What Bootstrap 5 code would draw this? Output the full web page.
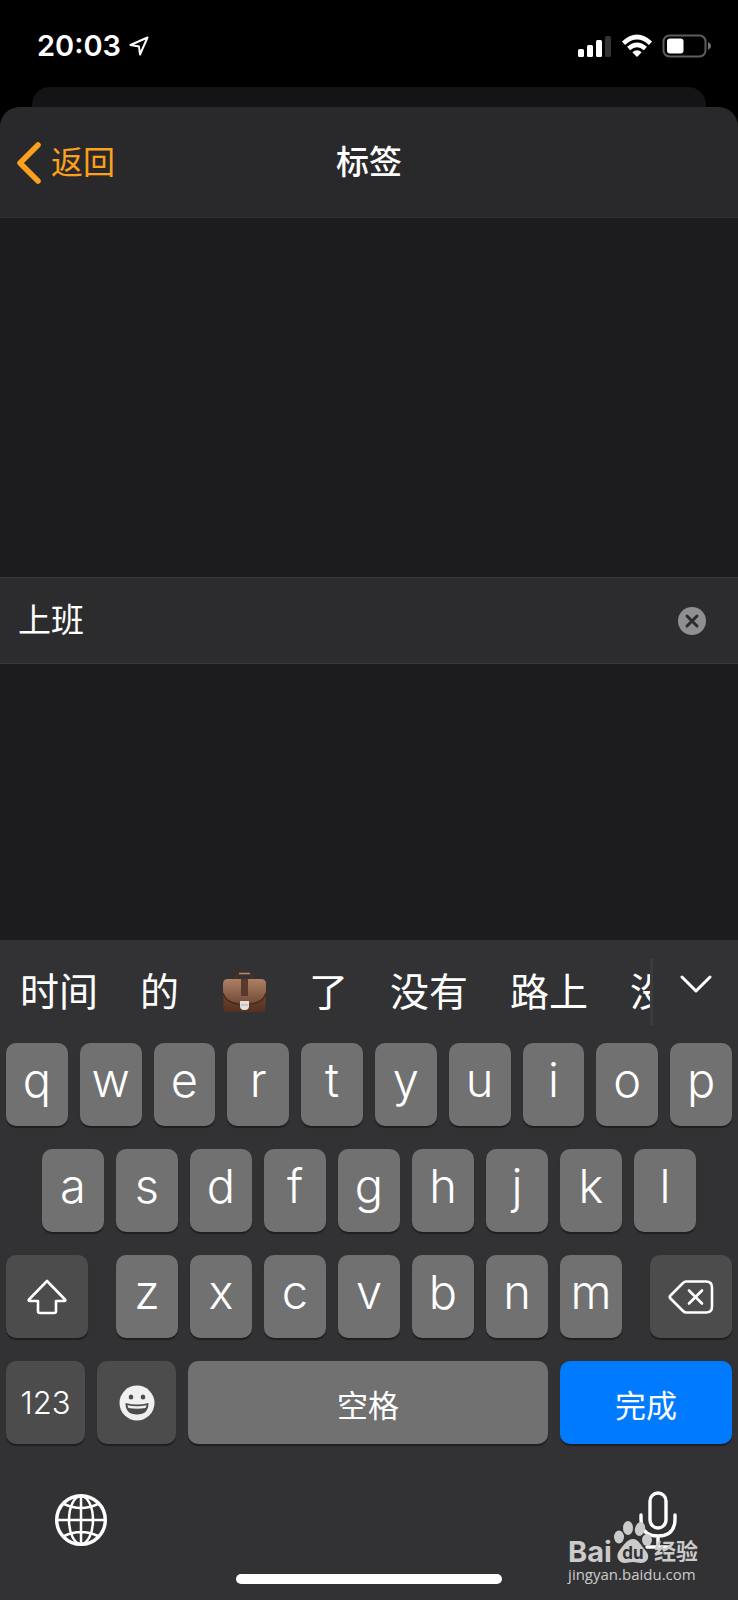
<!DOCTYPE html>
<html lang="zh-CN">
<head>
<meta charset="utf-8">
<meta name="viewport" content="width=device-width, initial-scale=1">
<title>标签</title>
<link rel="stylesheet" href="https://cdn.jsdelivr.net/npm/bootstrap@5.3.0/dist/css/bootstrap.min.css">
<script src="https://cdn.jsdelivr.net/npm/bootstrap@5.3.0/dist/js/bootstrap.bundle.min.js"></script>
<style>
  body { background: #000; color: #fff; font-family: Inter, "Noto Sans CJK SC", sans-serif; }
  button { color: inherit; background: none; border: 0; padding: 0; }
  svg { display: block; flex: none; }
  .status { height: 87px; padding: 4px 26px 0 37px; }
  .clock { font-size: 29px; font-weight: 600; line-height: 36px; }
  .sheet-behind { height: 20px; margin: 0 32px; background: #141416; border-radius: 18px 18px 0 0; }
  .sheet { background: #1c1c1e; border-radius: 20px 20px 0 0; overflow: hidden; }
  .sheet-head { height: 111px; background: #29292b; border-bottom: 1px solid #303032; }
  .side { flex: 1 1 0; }
  .back { color: #fca01d; font-size: 32px; line-height: 48px; padding: 2px 0 0 16px; gap: 9px; }
  .heading { font-size: 33px; font-weight: 500; line-height: 48px; }
  .space-above { flex: 30 0 0; }
  .space-below { flex: 23 0 0; }
  .field { height: 87px; background: #2c2c2e; border: solid #3a3a3c; border-width: 1px 0; padding: 0 32px 0 18px; }
  .field input { background: none; border: 0; outline: 0; color: #fff; font-size: 33px; line-height: 48px; padding: 0 0 2px; }
  .keyboard { background: #323234; }
  .candidates { height: 103px; }
  .words { gap: 42px; padding-left: 20px; font-size: 39px; line-height: 56px; min-width: 0; }
  .words button { flex: none; }
  .more { width: 88px; border-left: 3px solid #3b3b3d; height: 66px; padding-bottom: 6px; }
  .rows { gap: 23px; padding: 0 6px; }
  .rows > div { gap: 12px; }
  .rows > .row-home { padding: 0 36px; }
  .rows > .row-low { gap: 28px; }
  .letters { flex: 506 0 0; gap: 12px; }
  .key { flex: 1 1 0; min-width: 0; height: 83px; border-radius: 10px; background: #717172; box-shadow: 0 2px 1px #1e1e20; font-size: 47px; font-weight: 350; line-height: 60px; padding-bottom: 10px; }
  .key-dark { background: #4c4c4c; padding: 0; }
  .key-word { font-size: 31px; font-weight: 400; line-height: 46px; padding: 6px 0 0; }
  .key-num { font-size: 31px; }
  .key-blue { background: #007aff; }
  .w-side { flex: 82 0 0; }
  .w-num { flex: 79 0 0; }
  .w-space { flex: 360 0 0; }
  .w-done { flex: 172 0 0; }
  .tools { padding: 47px 60px 0 54px; }
  .home-bar { width: 36%; height: 10px; border-radius: 5px; background: #fff; margin: 25px auto 16px; }
  .watermark { right: 40px; bottom: 16px; color: #cbcbcc; pointer-events: none; }
  .wm-top { gap: 2px; }
  .wm-bai { font-size: 29px; font-weight: 700; line-height: 24px; }
  .wm-cn { font-size: 22px; font-weight: 700; line-height: 26px; }
  .wm-url { font-family: "Open Sans", sans-serif; font-size: 15px; font-weight: 500; line-height: 20px; }
</style>
</head>
<body class="min-vh-100 d-flex flex-column">
  <header class="status d-flex align-items-center justify-content-between">
    <div class="d-flex align-items-center gap-2">
      <span class="clock">20:03</span>
      <svg width="20" height="20" viewBox="0 0 20 20" fill="none" stroke="#fff" stroke-width="2" stroke-linejoin="round"><path d="M18.500 1.500 1.500 9l8.500 1.500L11 18.500z"/></svg>
    </div>
    <div class="d-flex align-items-center">
      <svg width="34" height="22" viewBox="0 0 34 22" fill="#fff"><rect y="14" width="6" height="8" rx="1.500"/><rect x="9" y="10" width="6" height="12" rx="1.500"/><rect x="18" y="5" width="6" height="17" rx="1.500"/><rect x="27" y="1" width="6" height="21" rx="1.500" fill="#333"/></svg>
      <svg class="ms-2" width="34" height="24" viewBox="0 0 34 24"><g fill="none" stroke="#fff" stroke-width="4.600"><path d="M3.500 9.200Q17-3.200 30.500 9.200"/><path d="M8.600 14.500Q17 7.200 25.400 14.500"/></g><path d="M12.300 18.200Q17 14.500 21.700 18.200L17 23z" fill="#fff"/></svg>
      <svg class="ms-2" width="50" height="24" viewBox="0 0 50 24"><rect x="1.500" y="1.500" width="42" height="21" rx="6" fill="none" stroke="#5e5e5e" stroke-width="2"/><rect x="5" y="4.500" width="16.500" height="15" rx="3" fill="#fff"/><path d="M46 8q3 1.500 3 4t-3 4z" fill="#777"/></svg>
    </div>
  </header>
  <div class="sheet-behind"></div>
  <main class="sheet flex-grow-1 d-flex flex-column">
    <div class="sheet-head d-flex align-items-center">
      <div class="side">
        <button type="button" class="back d-flex align-items-center">
          <svg width="26" height="42" viewBox="0 0 26 42" fill="none" stroke="currentColor" stroke-width="5.500" stroke-linecap="round" stroke-linejoin="round"><path d="M22 3 4 21l18 18"/></svg>
          <span>返回</span>
        </button>
      </div>
      <h1 class="heading m-0">标签</h1>
      <div class="side"></div>
    </div>
    <div class="space-above"></div>
    <div class="field d-flex align-items-center">
      <input type="text" class="flex-grow-1" aria-label="标签" value="上班">
      <button type="button" aria-label="清除">
        <svg width="28" height="28" viewBox="0 0 28 28"><circle cx="14" cy="14" r="14" fill="#8e8e93"/><path d="m9 9 10 10M19 9 9 19" stroke="#2c2c2e" stroke-width="3" stroke-linecap="round"/></svg>
      </button>
    </div>
    <div class="space-below"></div>
  </main>
  <section class="keyboard position-relative" aria-label="键盘">
    <div class="candidates d-flex align-items-center">
      <div class="words d-flex align-items-center flex-grow-1 overflow-hidden">
        <button type="button">时间</button>
        <button type="button">的</button>
        <button type="button" aria-label="公文包">
          <svg width="46" height="42" viewBox="0 0 46 42">
            <defs>
              <linearGradient id="flap" x2="0" y2="1"><stop stop-color="#ae8064"/><stop offset="1" stop-color="#714a37"/></linearGradient>
              <linearGradient id="bag" x2="0" y2="1"><stop stop-color="#825640"/><stop offset="1" stop-color="#55301f"/></linearGradient>
            </defs>
            <path d="M16 9V6q0-3 3-3h9q3 0 3 3v3" fill="none" stroke="#4b3027" stroke-width="3"/>
            <path d="M18 2.500h11" stroke="#b18b79" stroke-width="1.500"/>
            <rect x="2.500" y="10" width="42" height="31" rx="3" fill="url(#bag)"/>
            <path d="M2 13q0-5 5-5h33q5 0 5 5v9q-3 10-16 11H18Q5 32 2 22z" fill="url(#flap)"/>
            <path d="M2 22q3 10 16 11h11q13-1 16-11" fill="none" stroke="#442719" stroke-width="1.200"/>
            <path d="M20 8h7v17h-7z" fill="#5a382b"/>
            <path d="M19 30h9v5q0 4-4 4h-1q-4 0-4-4z" fill="#e2e0df"/><path d="M20 34h7" stroke="#aaa" stroke-width="1"/>
          </svg>
        </button>
        <button type="button">了</button>
        <button type="button">没有</button>
        <button type="button">路上</button>
        <button type="button">没</button>
      </div>
      <button type="button" class="more d-flex align-items-center justify-content-center flex-shrink-0" aria-label="展开">
        <svg width="32" height="30" viewBox="0 0 32 30" fill="none" stroke="#fff" stroke-width="3" stroke-linecap="round" stroke-linejoin="round"><path d="M2 3l14 14L30 3"/></svg>
      </button>
    </div>
    <div class="rows d-flex flex-column">
      <div class="d-flex">
        <button type="button" class="key">q</button><button type="button" class="key">w</button><button type="button" class="key">e</button><button type="button" class="key">r</button><button type="button" class="key">t</button><button type="button" class="key">y</button><button type="button" class="key">u</button><button type="button" class="key">i</button><button type="button" class="key">o</button><button type="button" class="key">p</button>
      </div>
      <div class="row-home d-flex">
        <button type="button" class="key">a</button><button type="button" class="key">s</button><button type="button" class="key">d</button><button type="button" class="key">f</button><button type="button" class="key">g</button><button type="button" class="key">h</button><button type="button" class="key">j</button><button type="button" class="key">k</button><button type="button" class="key">l</button>
      </div>
      <div class="row-low d-flex">
        <button type="button" class="key key-dark w-side d-flex align-items-center justify-content-center" aria-label="上档">
          <svg width="40" height="36" viewBox="0 0 40 36" fill="none" stroke="#fff" stroke-width="2.600" stroke-linejoin="round"><path d="M20 2 2 20.500q-1 1.500 1 1.500h8v10q0 2 2 2h14q2 0 2-2V22h8q2 0 1-1.500z"/></svg>
        </button>
        <div class="letters d-flex">
          <button type="button" class="key">z</button><button type="button" class="key">x</button><button type="button" class="key">c</button><button type="button" class="key">v</button><button type="button" class="key">b</button><button type="button" class="key">n</button><button type="button" class="key">m</button>
        </div>
        <button type="button" class="key key-dark w-side d-flex align-items-center justify-content-center" aria-label="删除">
          <svg width="46" height="34" viewBox="0 0 46 34" fill="none" stroke="#fff" stroke-width="2.600" stroke-linecap="round" stroke-linejoin="round"><path d="M18 1.500h20q6 0 6 6v19q0 6-6 6H18q-1.500 0-3-1.500L2.500 18.500q-1.500-1.500 0-3L15 3q1.500-1.500 3-1.500z"/><path d="m21 10.500 13 13M34 10.500l-13 13"/></svg>
        </button>
      </div>
      <div class="d-flex">
        <button type="button" class="key key-dark key-num w-num">123</button>
        <button type="button" class="key key-dark w-num d-flex align-items-center justify-content-center" aria-label="表情">
          <svg width="36" height="36" viewBox="0 0 36 36"><circle cx="18" cy="18" r="17.500" fill="#f0f0f0"/><g fill="#4c4c4c"><ellipse cx="12" cy="12" rx="2.300" ry="2.500"/><ellipse cx="24" cy="12" rx="2.300" ry="2.500"/><path d="M6.500 18q11.500 3 23 0 0 11.500-11.500 11.500T6.500 18z"/></g><path d="M8.500 20.200q9.500 2 19 0-.3 1.800-1.200 2.900-8.300 1.500-16.600 0-.9-1.100-1.200-2.900z" fill="#f0f0f0"/></svg>
        </button>
        <button type="button" class="key key-word w-space">空格</button>
        <button type="button" class="key key-word key-blue w-done">完成</button>
      </div>
    </div>
    <div class="tools d-flex align-items-center justify-content-between">
      <button type="button" aria-label="切换键盘">
        <svg width="54" height="54" viewBox="0 0 54 54" fill="none" stroke="#fff" stroke-width="2.500"><circle cx="27" cy="27" r="24.300" stroke-width="3.400"/><ellipse cx="27" cy="27" rx="12" ry="24"/><path d="M27 3v48M3 27h48M10 11q17 8 34 0M10 43q17-8 34 0"/></svg>
      </button>
      <button type="button" aria-label="听写">
        <svg width="40" height="58" viewBox="0 0 40 58" fill="none" stroke="#fff" stroke-width="3.400" stroke-linecap="round"><rect x="12" y="2" width="16" height="35" rx="8"/><path d="M3 24v4q0 17 17 17t17-17v-4M20 45v10M9 56h22"/></svg>
      </button>
    </div>
    <div class="home-bar"></div>
    <div class="watermark position-absolute">
      <div class="wm-top d-flex align-items-end">
        <span class="wm-bai">Bai</span>
        <svg width="38" height="43" viewBox="1 1 38 43" fill="currentColor"><ellipse cx="6" cy="17" rx="5" ry="6.500"/><ellipse cx="15" cy="8" rx="5" ry="7"/><ellipse cx="27" cy="9" rx="5" ry="7" transform="rotate(15 27 9)"/><ellipse cx="34" cy="20" rx="5" ry="6"/><path d="M20 19c6 0 8 7 13 12 5 6 1 12-5 12-3 0-5-1-8-1s-5 1-8 1C6 43 2 37 6 31c4-5 8-12 14-12z"/><text x="20" y="39" text-anchor="middle" font-size="17" font-weight="700" fill="#323234">du</text></svg>
        <span class="wm-cn">经验</span>
      </div>
      <div class="wm-url">jingyan.baidu.com</div>
    </div>
  </section>
</body>
</html>
